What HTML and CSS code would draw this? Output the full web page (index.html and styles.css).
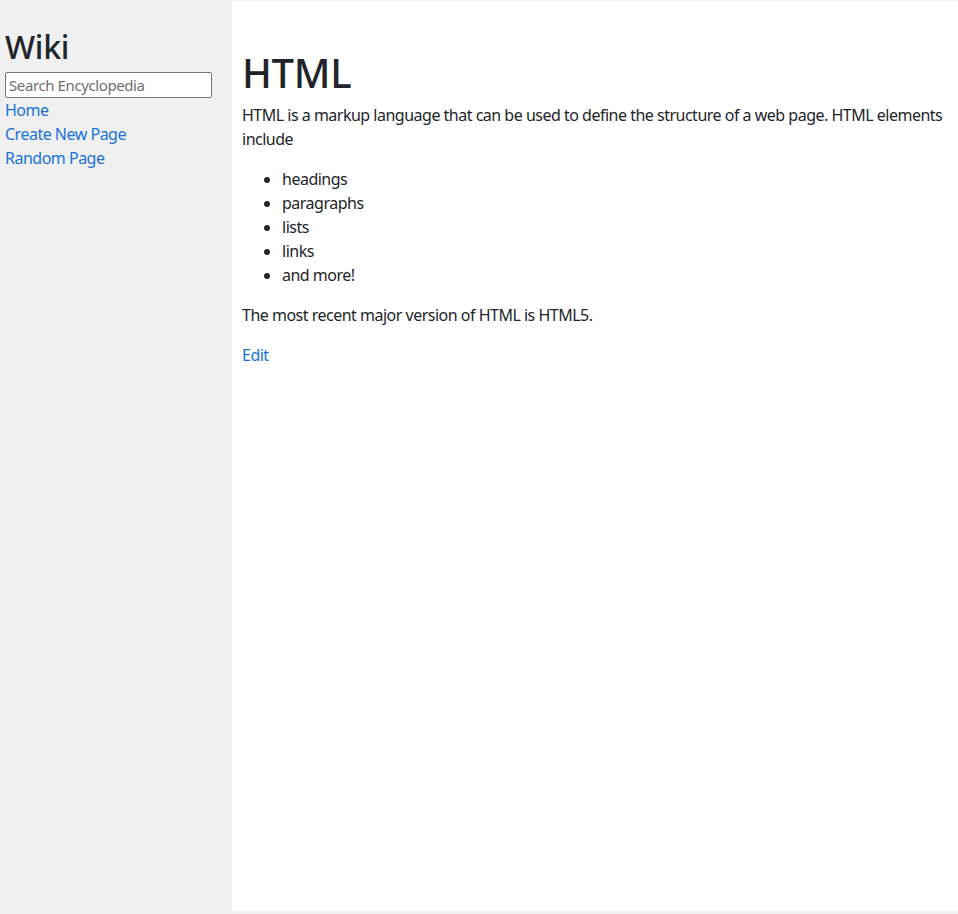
FILE: index.html
```html
<!DOCTYPE html>
<html lang="en">
<head>
<meta charset="utf-8">
<title>HTML</title>
<link rel="stylesheet" href="styles.css">
</head>
<body>
<div class="row">
  <div class="sidebar">
    <h2 class="brand">Wiki</h2>
    <form class="search">
      <input class="search-input" type="text" name="q" placeholder="Search Encyclopedia">
    </form>
    <div class="nav-link"><a href="#">Home</a></div>
    <div class="nav-link"><a href="#">Create New Page</a></div>
    <div class="nav-link"><a href="#">Random Page</a></div>
  </div>
  <div class="main">
    <h1 class="title">HTML</h1>
    <p class="para">HTML is a markup language that can be used to define the structure of a web page. HTML elements include</p>
    <ul class="list">
      <li>headings</li>
      <li>paragraphs</li>
      <li>lists</li>
      <li>links</li>
      <li>and more!</li>
    </ul>
    <p class="para">The most recent major version of HTML is HTML5.</p>
    <p class="para"><a href="#">Edit</a></p>
  </div>
</div>
</body>
</html>
```
FILE: styles.css
```css
html, body {
  margin: 0;
  padding: 0;
}
body {
  background: #f0f0f0;
  font-family: "Noto Sans", "Open Sans", sans-serif;
  font-size: 16px;
  line-height: 1.5;
  letter-spacing: -0.5px;
  color: #212529;
  padding-top: 1px;
}
a {
  color: #1a73d9;
  text-decoration: none;
}
.row {
  display: flex;
  height: 910px;
}
.sidebar {
  width: 227px;
  flex: none;
  background: #f0f0f0;
  padding: 27px 0 0 5px;
}
.brand {
  margin: 0 0 6px 0;
  font-size: 32px;
  font-weight: 500;
  line-height: 1.2;
  letter-spacing: -0.3px;
}
.search {
  margin: 0;
}
.search-input {
  box-sizing: border-box;
  width: 207px;
  height: 26px;
  margin: 0;
  padding: 1px 3px;
  border: 1px solid #767676;
  border-radius: 2px;
  font-family: inherit;
  font-size: 15px;
  letter-spacing: -0.4px;
  color: #212529;
  background: #fff;
}
.search-input::placeholder {
  color: #6f6f6f;
}
.nav-link {
  line-height: 24px;
}
.main {
  flex: 1;
  background: #fff;
  padding: 48px 4px 0 10px;
}
.title {
  margin: 0 0 6px 0;
  font-size: 40px;
  font-weight: 500;
  line-height: 1.2;
  letter-spacing: -0.3px;
}
.para {
  margin: 0 0 16px 0;
}
.list {
  margin: 0 0 16px 0;
  padding-left: 40px;
}
```
